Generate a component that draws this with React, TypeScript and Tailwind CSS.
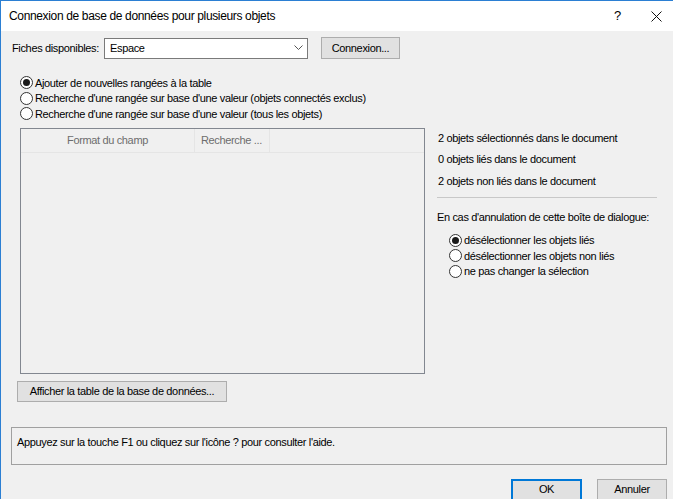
import React from "react";

const font = { fontFamily: '"Liberation Sans", Arial, sans-serif' };

function Radio({ checked }: { checked?: boolean }) {
  return (
    <span className="relative inline-flex h-[13px] w-[13px] shrink-0 items-center justify-center rounded-full border border-[#333333] bg-white">
      {checked && <span className="h-[7px] w-[7px] rounded-full bg-[#1a1a1a]" />}
    </span>
  );
}

function RadioRow({ checked, label }: { checked?: boolean; label: string }) {
  return (
    <div className="flex h-[15.5px] items-center gap-[2px]">
      <Radio checked={checked} />
      <span className="whitespace-nowrap">{label}</span>
    </div>
  );
}

export default function App() {
  return (
    <div
      className="flex h-[499px] w-[673px] flex-col overflow-hidden border-l border-t border-[#2b7fd3] bg-[#f0f0f0] text-[11px] tracking-[-0.35px] text-black"
      style={font}
    >
      {/* Title bar */}
      <div className="flex h-[30px] shrink-0 items-center bg-white pl-[8px] text-[12px] tracking-[-0.35px]">
        <span className="flex-1">Connexion de base de données pour plusieurs objets</span>
        <span className="mr-[30px] text-[13px]">?</span>
        <svg width="11" height="11" viewBox="0 0 11 11" className="mr-[11px]">
          <path d="M0.5 0.5 L10.5 10.5 M10.5 0.5 L0.5 10.5" stroke="#111" strokeWidth="1" />
        </svg>
      </div>

      {/* Top row */}
      <div className="mt-[6px] flex h-[22px] items-center pl-[11px]">
        <span className="w-[92px]">Fiches disponibles:</span>
        <div className="flex h-[21px] w-[204px] items-center border border-[#7a7a7a] bg-white pl-[5px] pr-[4px]">
          <span className="flex-1">Espace</span>
          <svg width="9" height="6" viewBox="0 0 9 6">
            <path d="M0.5 0.5 L4.5 4.5 L8.5 0.5" stroke="#555" fill="none" strokeWidth="1" />
          </svg>
        </div>
        <div className="ml-[13px] flex h-[22px] w-[79px] items-center justify-center border border-[#adadad] bg-[#e1e1e1]">
          Connexion...
        </div>
      </div>

      {/* Radio options */}
      <div className="mt-[16px] flex flex-col pl-[19px]">
        <RadioRow checked label="Ajouter de nouvelles rangées à la table" />
        <RadioRow label="Recherche d'une rangée sur base d'une valeur (objets connectés exclus)" />
        <RadioRow label="Recherche d'une rangée sur base d'une valeur (tous les objets)" />
      </div>

      {/* Main area */}
      <div className="mt-[6px] flex pl-[19px]">
        <div className="flex h-[246px] w-[405px] flex-col border border-[#828790] bg-[#f0f0f0]">
          <div className="flex h-[24px] items-center border-b border-[#e5e5e5] text-[#6d6d6d]">
            <div className="flex h-full w-[174px] items-center justify-center border-r border-[#e5e5e5]">
              Format du champ
            </div>
            <div className="flex h-full w-[75px] items-center border-r border-[#e5e5e5] pl-[6px]">
              Recherche ...
            </div>
          </div>
        </div>

        <div className="ml-[12px] flex w-[220px] flex-col">
          <div className="mt-[3px] flex h-[16px] items-center pl-[1px]">2 objets sélectionnés dans le document</div>
          <div className="mt-[5px] flex h-[16px] items-center pl-[1px]">0 objets liés dans le document</div>
          <div className="mt-[6px] flex h-[16px] items-center pl-[1px]">2 objets non liés dans le document</div>
          <div className="mt-[7px] h-px w-[220px] bg-[#c8c8c8]" />
          <div className="mt-[12px] flex h-[16px] items-center">
            En cas d'annulation de cette boîte de dialogue:
          </div>
          <div className="mt-[7px] flex flex-col pl-[12px]">
            <RadioRow checked label="désélectionner les objets liés" />
            <RadioRow label="désélectionner les objets non liés" />
            <RadioRow label="ne pas changer la sélection" />
          </div>
        </div>
      </div>

      {/* Afficher button */}
      <div className="mt-[7px] pl-[16px]">
        <div className="flex h-[21px] w-[210px] items-center justify-center border border-[#adadad] bg-[#e1e1e1]">
          Afficher la table de la base de données...
        </div>
      </div>

      {/* Help box */}
      <div className="mt-[25px] px-[10px]">
        <div className="h-[38px] w-[656px] border border-[#a0a0a0] bg-[#f0f0f0] pl-[5px] pt-[6px]">
          Appuyez sur la touche F1 ou cliquez sur l'icône ? pour consulter l'aide.
        </div>
      </div>

      {/* Bottom buttons */}
      <div className="mt-[14px] flex justify-end pr-[6px]">
        <div className="flex h-[22px] w-[71px] items-center justify-center border-2 border-[#0078d7] bg-[#e1e1e1]">
          OK
        </div>
        <div className="ml-[15px] flex h-[22px] w-[70px] items-center justify-center border border-[#adadad] bg-[#e1e1e1]">
          Annuler
        </div>
      </div>
    </div>
  );
}
